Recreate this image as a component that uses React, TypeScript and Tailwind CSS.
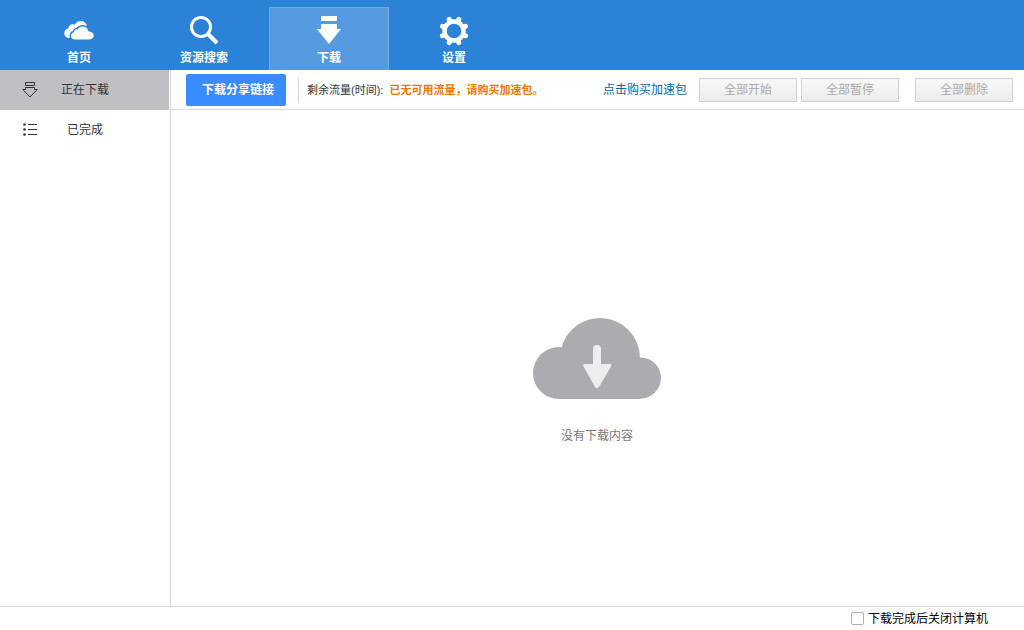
import { useState } from 'react';
import type { ComponentType } from 'react';

const frontCloud =
    'M11 19.500C8.600 19.500 7 18 7 16c0-2 1.300-3.400 3-3.700.1-2.200 1.700-3.300 3.700-2.900 1-1.900 2.700-2.900 4.900-2.900 3.200 0 5.400 2 5.900 4.900 2.900 0 5.300 1.700 5.300 4.200 0 2.300-1.800 3.900-4.200 3.900z';

const CloudsIcon = () => (
    <svg width="30" height="20" viewBox="0 0 30 20" fill="#fff" aria-hidden="true">
        <mask id="cloud-gap">
            <path d="M0 0h30v20H0z" />
            <path d={frontCloud} fill="#000" stroke="#000" strokeWidth="3" />
        </mask>
        <g mask="url(#cloud-gap)">
            <path d="M8 18H5.500C2.300 18 .3 16 .3 13.200c0-2.500 1.600-4.300 3.900-4.700.2-2.800 2.300-4.500 4.700-4.300.8 0 1.500.2 2.100.5C12 2.300 14.100 1 16.600 1c3.400 0 6 2.200 6.400 5.500v6z" />
        </g>
        <path d={frontCloud} />
    </svg>
);

const SearchIcon = () => (
    <svg width="30" height="30" viewBox="0 0 30 30" fill="none" stroke="#fff" aria-hidden="true">
        <circle cx="12" cy="12" r="9.500" strokeWidth="3" />
        <path d="M18.500 18.500L28 28" strokeWidth="4" />
    </svg>
);

const DownloadIcon = () => (
    <svg width="24" height="28" viewBox="0 0 24 28" fill="#fff" aria-hidden="true">
        <path d="M4 0h16v5H4zM4 8h16v5h4L12 28 0 13h4z" />
    </svg>
);

const GearIcon = () => (
    <svg width="30" height="30" viewBox="0 0 30 28" fill="none" stroke="#fff" overflow="visible" aria-hidden="true">
        <circle cx="15" cy="15" r="9.500" strokeWidth="4.500" />
        {[22.5, 67.5, 112.5, 157.5].map((angle) => (
            <g key={angle} transform={`rotate(${angle} 15 15)`}>
                <path d="M15 2.500v2M15 25.500v2" strokeWidth="5" strokeLinecap="round" />
            </g>
        ))}
    </svg>
);

const DownloadingIcon = () => (
    <svg width="16" height="16" viewBox="0 0 16 16" fill="none" stroke="#333" aria-hidden="true">
        <path d="M3.500 .5h9v3h-9zM3.500 5.500h9v2h2.700L8 15 .8 7.500h2.700z" />
    </svg>
);

const ListIcon = () => (
    <svg width="16" height="16" viewBox="0 0 16 16" aria-hidden="true">
        <path d="M6 2.500h9M6 7.500h9M6 12.500h9" stroke="#333" />
        <g fill="#333">
            <circle cx="2.500" cy="2.500" r="1.300" />
            <circle cx="2.500" cy="7.500" r="1.300" />
            <circle cx="2.500" cy="12.500" r="1.300" />
        </g>
    </svg>
);

const EmptyCloud = () => (
    <svg width="128" height="81" viewBox="0 0 128 81" aria-hidden="true">
        <g fill="#acabb0">
            <circle cx="26" cy="55" r="26" />
            <circle cx="67" cy="40" r="40" />
            <circle cx="107.500" cy="60" r="20.500" />
            <path d="M26 50h82v30.500q0 .5-1 .5H26z" />
        </g>
        <path d="M60 31a4 4 0 0 1 8 0v15h9q2 .5 1 2.500L66 69q-2 2-4 0L50.500 48.500q-1-2 .5-2.500h9z" fill="#eee" />
    </svg>
);

type Item = { id: string; label: string; icon: ComponentType };

const tabs: Item[] = [
    { id: 'home', label: '首页', icon: CloudsIcon },
    { id: 'search', label: '资源搜索', icon: SearchIcon },
    { id: 'download', label: '下载', icon: DownloadIcon },
    { id: 'settings', label: '设置', icon: GearIcon },
];

const sidebarItems: Item[] = [
    { id: 'active', label: '正在下载', icon: DownloadingIcon },
    { id: 'done', label: '已完成', icon: ListIcon },
];

const actionClass =
    'h-6 w-[98px] border border-[#d0d0d0] bg-linear-to-b from-[#f8f8f8] to-[#ededed] text-[#aaa]';

export default function App() {
    const [tab, setTab] = useState('download');
    const [section, setSection] = useState('active');
    const [shutdown, setShutdown] = useState(false);

    return (
        <div className="flex min-h-screen flex-col bg-white font-['Liberation_Sans','Noto_Sans_CJK_SC',sans-serif] text-xs text-[#333]">
            {/* Top navigation */}
            <header className="bg-[#2b82d6] pt-[7px] pl-[19px]">
                <nav className="flex gap-[5px]">
                    {tabs.map((item) => (
                        <button
                            key={item.id}
                            type="button"
                            onClick={() => setTab(item.id)}
                            className={`flex h-[63px] w-[120px] flex-col items-center border border-b-0 pt-1.5 font-bold text-white ${tab === item.id ? 'border-[#6fadea] bg-[#569bdf]' : 'border-transparent'}`}
                        >
                            <span className="flex h-8 items-center">
                                <item.icon />
                            </span>
                            <span className="mt-1">{item.label}</span>
                        </button>
                    ))}
                </nav>
            </header>

            <div className="flex flex-1">
                {/* Sidebar */}
                <aside className="w-[171px] shrink-0 border-r border-[#d9d9d9] pr-px">
                    {sidebarItems.map((item) => (
                        <button
                            key={item.id}
                            type="button"
                            onClick={() => setSection(item.id)}
                            className={`flex h-10 w-full items-center pl-[22px] ${section === item.id ? 'bg-[#c0c0c4]' : ''}`}
                        >
                            <item.icon />
                            <span className="w-[94px] text-center">{item.label}</span>
                        </button>
                    ))}
                </aside>

                <main className="flex flex-1 flex-col">
                    {/* Toolbar */}
                    <div className="flex h-10 items-center border-b border-[#d9d9d9] pr-[11px] pl-[15px]">
                        <button type="button" className="h-8 w-[100px] rounded-xs bg-[#398cff] pl-1 font-bold text-white">
                            下载分享链接
                        </button>
                        <div className="ml-3 h-6 border-l border-[#d9d9d9]" />
                        <p className="ml-2 pt-px text-[11px] whitespace-nowrap">
                            剩余流量(时间):
                            <strong className="ml-1.5 text-[#e77800]">已无可用流量，请购买加速包。</strong>
                        </p>
                        <a href="#buy" className="mr-3 ml-auto pt-px text-[#0b64a0]">点击购买加速包</a>
                        <button type="button" disabled className={actionClass}>全部开始</button>
                        <button type="button" disabled className={`${actionClass} ml-1`}>全部暂停</button>
                        <button type="button" disabled className={`${actionClass} ml-4`}>全部删除</button>
                    </div>

                    {/* Empty state */}
                    <div className="flex flex-1 flex-col items-center justify-center pt-[45px] pr-px">
                        <EmptyCloud />
                        <p className="mt-[29px] text-[#777]">没有下载内容</p>
                    </div>
                </main>
            </div>

            {/* Footer */}
            <footer className="flex h-6 items-center justify-end border-t border-[#d9d9d9] pr-9">
                <label className="flex items-center gap-1 text-black">
                    <input
                        type="checkbox"
                        checked={shutdown}
                        onChange={(e) => setShutdown(e.target.checked)}
                        className="size-[13px] appearance-none rounded-xs border border-[#b0b0b0] bg-white checked:bg-[#398cff]"
                    />
                    下载完成后关闭计算机
                </label>
            </footer>
        </div>
    );
}
